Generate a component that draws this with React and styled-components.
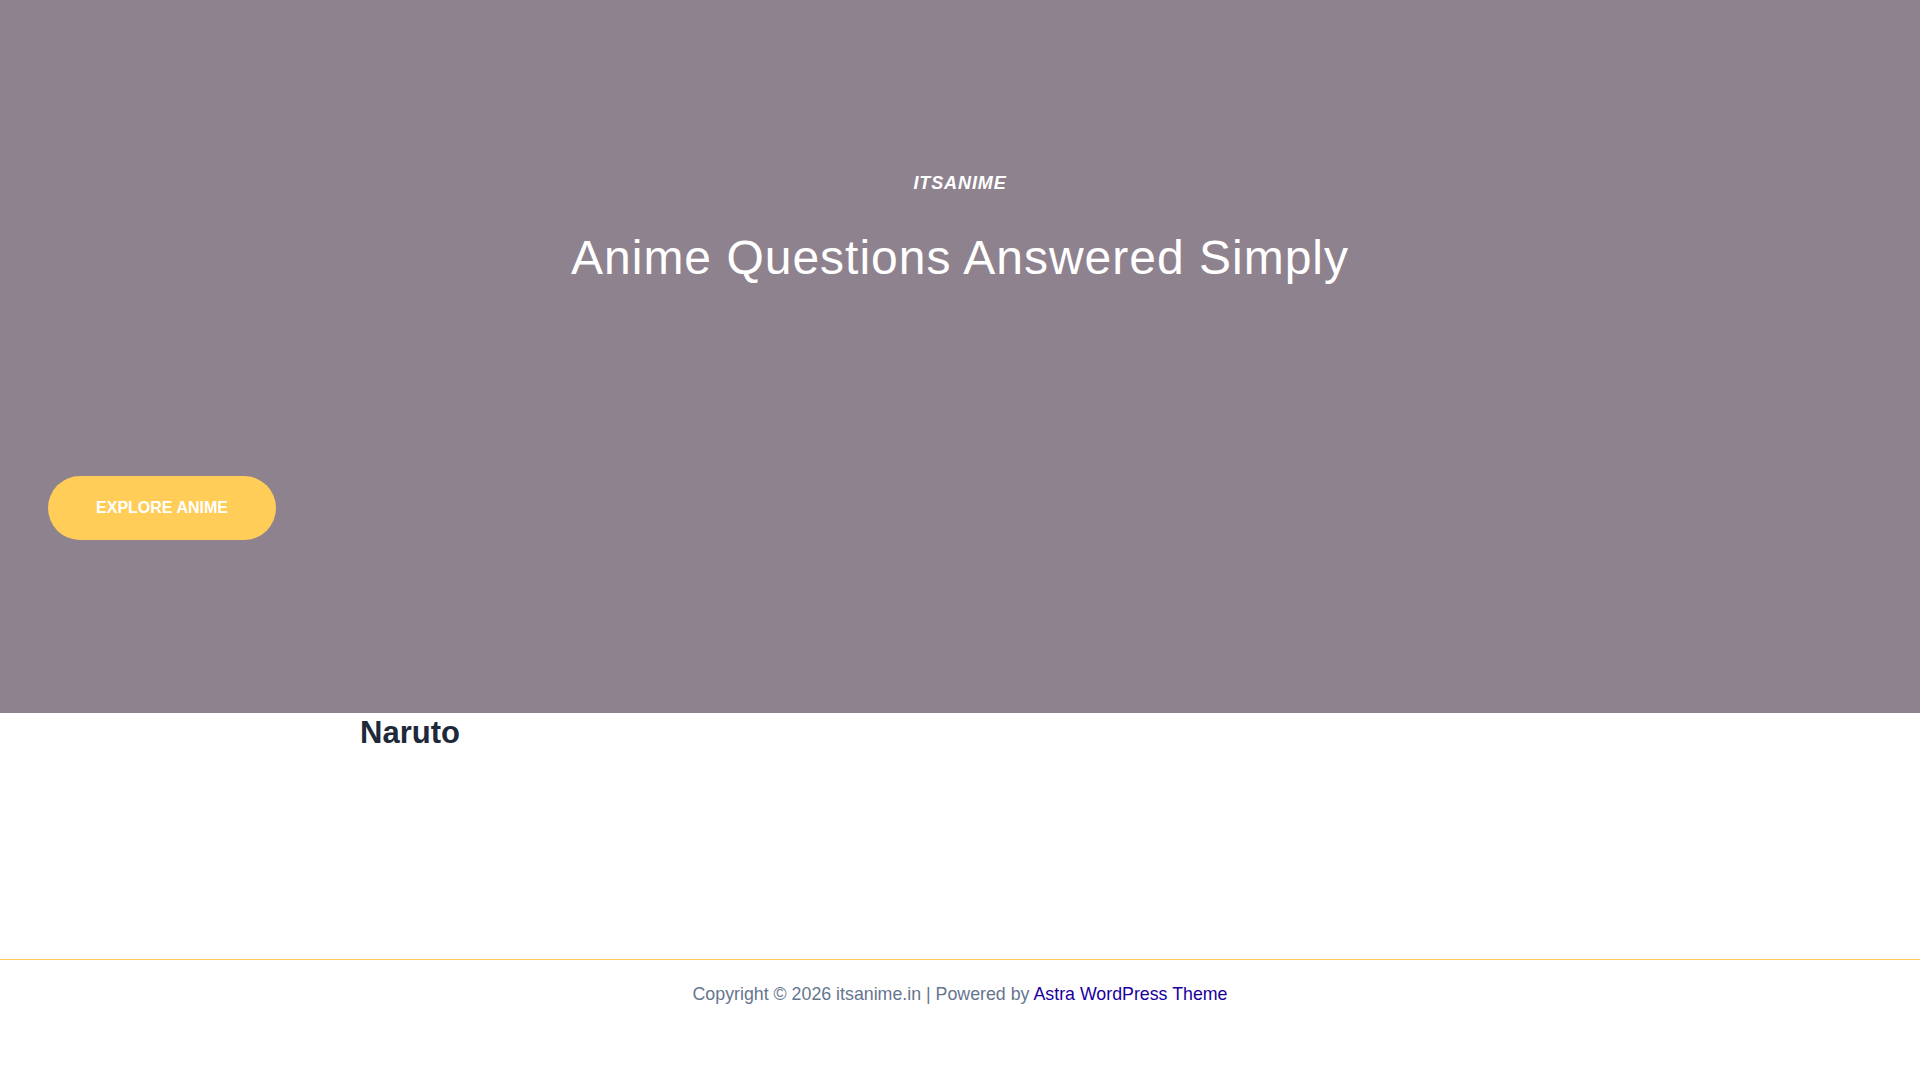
import React from "react";
import styled, { createGlobalStyle } from "styled-components";

const Global = createGlobalStyle`
  html, body { margin: 0; padding: 0; background: #ffffff; }
  body { font-family: "Liberation Sans", Arial, sans-serif; }
  * { box-sizing: border-box; }
`;

const Page = styled.div`
  min-height: 1080px;
  display: flex;
  flex-direction: column;
`;

const Hero = styled.header`
  height: 713px;
  background: #8f828f;
  display: flex;
  flex-direction: column;
  align-items: center;
  padding-top: 170px;
`;

const SiteTitle = styled.p`
  margin: 0;
  font-size: 18px;
  line-height: 26px;
  font-style: italic;
  font-weight: 700;
  color: #ffffff;
  letter-spacing: 0.9px;
`;

const Tagline = styled.h1`
  margin: 33px 0 0;
  font-size: 48px;
  line-height: 58px;
  font-weight: 400;
  letter-spacing: 1px;
  color: #ffffff;
`;

const CtaButton = styled.a`
  align-self: flex-start;
  margin: 189px 0 0 48px;
  width: 228px;
  height: 64px;
  border-radius: 32px;
  background: #ffcd58;
  color: #ffffff;
  font-size: 16px;
  font-weight: 700;
  text-transform: uppercase;
  text-decoration: none;
  display: flex;
  align-items: center;
  justify-content: center;
`;

const Main = styled.main`
  height: 246px;
  width: 1200px;
  margin: 0 auto;
`;

const PostTitle = styled.h2`
  margin: 0;
  font-size: 31px;
  line-height: 40px;
  font-weight: 700;
  color: #1e293b;
`;

const Footer = styled.footer`
  border-top: 1px solid #ffcd58;
  padding-top: 21px;
  flex: 1;
  display: flex;
  justify-content: center;
`;

const FooterText = styled.p`
  margin: 0;
  font-size: 17.8px;
  line-height: 27px;
  color: #66758e;
`;

const FooterLink = styled.a`
  color: #1a009e;
  text-decoration: none;
`;

export default function App() {
  return (
    <Page>
      <Global />
      <Hero>
        <SiteTitle>ITSANIME</SiteTitle>
        <Tagline>Anime Questions Answered Simply</Tagline>
        <CtaButton href="#">Explore Anime</CtaButton>
      </Hero>
      <Main>
        <PostTitle>Naruto</PostTitle>
      </Main>
      <Footer>
        <FooterText>
          Copyright © 2026 itsanime.in | Powered by{" "}
          <FooterLink href="#">Astra WordPress Theme</FooterLink>
        </FooterText>
      </Footer>
    </Page>
  );
}
